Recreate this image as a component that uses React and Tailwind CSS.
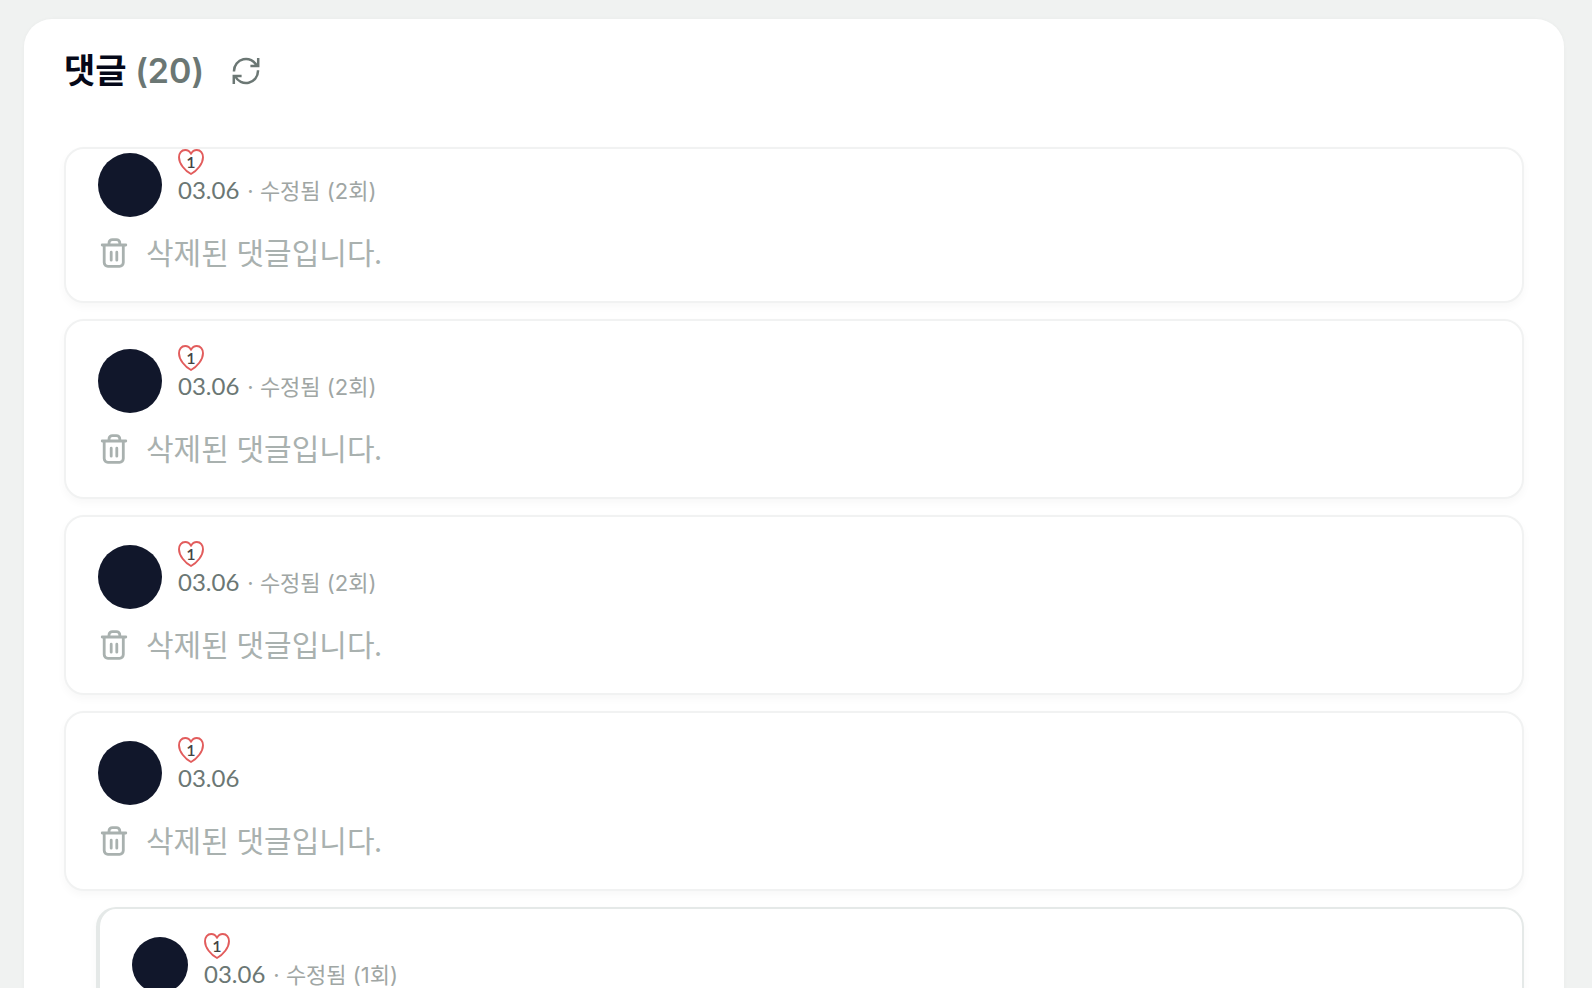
const comments = [
  { id: 1, date: "03.06", edits: 2, likes: 1, first: true },
  { id: 2, date: "03.06", edits: 2, likes: 1 },
  { id: 3, date: "03.06", edits: 2, likes: 1 },
  { id: 4, date: "03.06", edits: 0, likes: 1 },
  { id: 5, date: "03.06", edits: 1, likes: 1, reply: true },
];

function RefreshIcon() {
  return (
    <svg className="size-7" viewBox="0 0 28 28" fill="none" stroke="currentColor" strokeWidth="2.5" aria-hidden="true">
      <path d="M2 14.6V14A12 12 0 0 1 24.8 8.8" />
      <path d="M26.2 1v8h-7.8" />
      <path d="M26 13.2v.8A12 12 0 0 1 3.2 19.2" />
      <path d="M1.8 27v-8h7.8" />
    </svg>
  );
}

function TrashIcon() {
  return (
    <svg className="size-8 shrink-0" viewBox="0 0 32 32" fill="none" stroke="currentColor" strokeWidth="2.8" strokeLinecap="round" aria-hidden="true">
      <path d="M4.2 8h23.6" />
      <path d="M11 7.6V6a3.4 3.4 0 0 1 3.4-3.4h4a3.4 3.4 0 0 1 3.4 3.4v1.6" />
      <path d="M6.2 8.4v17.2a3.7 3.7 0 0 0 3.7 3.7h11.7a3.7 3.7 0 0 0 3.7-3.7V8.4" />
      <path d="M13.2 15.2v8M18.8 15.2v8" />
    </svg>
  );
}

function LikeButton({ count }) {
  return (
    <button type="button" aria-label="좋아요" className="relative block size-[26px]">
      <svg className="size-[26px] text-[#e25c5c]" viewBox="0 0 26 26" fill="none" stroke="currentColor" strokeWidth="1.9" strokeLinejoin="round" aria-hidden="true">
        <path d="M13 4.8C11.4 1.8 9 1 7.2 1C3.4 1 1 4 1 8.2C1 14.6 6.8 21.6 13 25C19.2 21.6 25 14.6 25 8.2C25 4 22.6 1 18.8 1C17 1 14.6 1.8 13 4.8Z" />
      </svg>
      <span className="absolute inset-0 flex items-center justify-center font-['Lato',sans-serif] text-base font-semibold text-[#444444]">
        {count}
      </span>
    </button>
  );
}

function Comment({ comment }) {
  const { date, edits, likes, first, reply } = comment;
  return (
    <li
      className={`rounded-[20px] border-2 bg-white px-8 pb-6 shadow-[0_4px_8px_rgba(0,0,0,0.03)] ${
        reply ? "ml-8 border-l-4 border-[#e5e9e8]" : "border-[#f1f2f2]"
      } ${first ? "pt-0" : "pt-6"}`}
    >
      <div className="flex items-start gap-4">
        <div className={`mt-1 shrink-0 rounded-full bg-[#11172b] ${reply ? "size-14" : "size-16"}`} />
        <div>
          <LikeButton count={likes} />
          <div className="flex items-baseline gap-2 text-[22px] leading-[30px] text-[#a0a6a4]">
            <time className="text-2xl leading-[30px] text-[#6b7774]">{date}</time>
            {edits > 0 && (
              <span className="font-['Inter','Noto_Sans_CJK_KR',sans-serif]">· 수정됨 ({edits}회)</span>
            )}
          </div>
        </div>
      </div>
      <div className="mt-3 flex h-12 items-center gap-4 text-[#a9b1af]">
        <TrashIcon />
        <p className="pb-0.5 text-[30px] leading-10">삭제된 댓글입니다.</p>
      </div>
    </li>
  );
}

export default function App() {
  return (
    <div className="h-screen overflow-hidden bg-[#f0f2f1] px-6 pt-[19px] pr-7 font-['Lato','Noto_Sans_CJK_KR',sans-serif]">
      <main className="rounded-[28px] bg-white px-10 pt-8 pb-10 shadow-[0_0_4px_rgba(0,0,0,0.03)]">
        <header className="flex h-10 items-center gap-7">
          <h1 className="font-['Inter','Noto_Sans_CJK_KR',sans-serif] text-[34px] leading-10 font-semibold text-[#050818]">
            댓글 <span className="text-[#6b7774]">(20)</span>
          </h1>
          <button type="button" aria-label="새로고침" className="text-[#6b7774]">
            <RefreshIcon />
          </button>
        </header>
        <ul className="mt-14 flex flex-col gap-4">
          {comments.map((comment) => (
            <Comment key={comment.id} comment={comment} />
          ))}
        </ul>
      </main>
    </div>
  );
}
